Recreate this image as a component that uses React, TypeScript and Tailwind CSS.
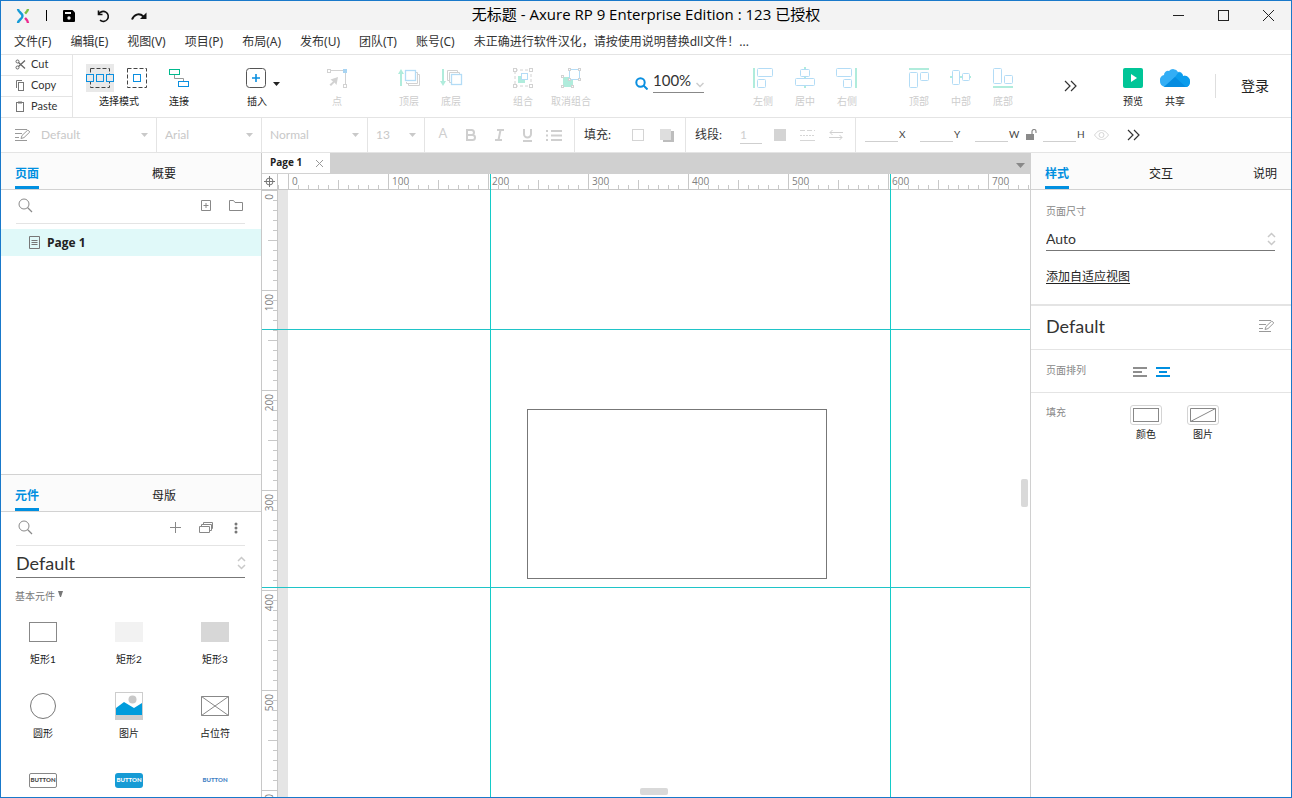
import { useEffect, useRef, useState, type ReactNode } from "react";
import clsx from "clsx";

const MENUS = [
  "文件(F)",
  "编辑(E)",
  "视图(V)",
  "项目(P)",
  "布局(A)",
  "发布(U)",
  "团队(T)",
  "账号(C)",
];

const GUIDES_X = [228, 628];
const GUIDES_Y = [155, 413];

const GREEN = "#b0ecdc";
const BLUE = "#b3dcf6";
const GRAY = "#d2d2d2";

interface ToolProps {
  label: string;
  muted?: boolean;
  className?: string;
  children: ReactNode;
}

function Tool({ label, muted = false, className, children }: ToolProps) {
  return (
    <button
      type="button"
      className={clsx(
        "flex w-[42px] shrink-0 flex-col items-center whitespace-nowrap text-[10px] leading-[14px]",
        muted ? "text-[#cdcdcd]" : "text-[#222]",
        className
      )}
    >
      <svg
        width="42"
        height="22"
        viewBox="0 0 42 22"
        fill="none"
        className="mb-[5px] overflow-visible"
        aria-hidden="true"
      >
        {children}
      </svg>
      {label}
    </button>
  );
}

function Caret() {
  return (
    <svg width="7" height="4" viewBox="0 0 7 4" fill="#c9c9c9" className="shrink-0" aria-hidden="true">
      <path d="M0 0h7L3.500 4z" />
    </svg>
  );
}

function UpDown() {
  return (
    <svg
      width="9"
      height="14"
      viewBox="0 0 9 14"
      fill="none"
      stroke="#c9c9c9"
      strokeWidth="1.5"
      className="pointer-events-none -mr-px shrink-0"
      aria-hidden="true"
    >
      <path d="M1 5l3.500-3.500L8 5M1 9l3.500 3.500L8 9" />
    </svg>
  );
}

function DoubleChevron() {
  return (
    <svg width="13" height="12" viewBox="0 0 13 12" fill="none" stroke="#333" strokeWidth="1.200" aria-hidden="true">
      <path d="M1 1l5 5-5 5M7 1l5 5-5 5" />
    </svg>
  );
}

function SearchIcon() {
  return (
    <svg width="15" height="15" viewBox="0 0 15 15" fill="none" stroke="#8a8a8a" aria-hidden="true">
      <circle cx="6" cy="6" r="5" />
      <path d="M9.500 9.500l4.500 4.500" strokeWidth="1.300" />
    </svg>
  );
}

function StyleEditIcon({ color }: { color: string }) {
  return (
    <svg width="16" height="14" viewBox="0 0 16 14" fill="none" stroke={color} aria-hidden="true">
      <path d="M0 1.500h12M0 5.500h7M0 9.500h4M0 12.500h12" />
      <path d="M6 10.500l1-3L12.800 2l2 2L9 9.600z" />
    </svg>
  );
}

interface FormatSelectProps {
  label: string;
  value: string;
  className: string;
  children?: ReactNode;
}

function FormatSelect({ label, value, className, children }: FormatSelectProps) {
  return (
    <div className={clsx("flex shrink-0 items-center border-r border-[#e4e4e4] pr-2 pl-2", className)}>
      {children}
      <select
        aria-label={label}
        defaultValue={value}
        className="min-w-0 flex-1 appearance-none bg-transparent pb-px text-xs text-[#c8c8c8] outline-none"
      >
        <option>{value}</option>
      </select>
      <Caret />
    </div>
  );
}

function SizeField({ name, className }: { name: string; className?: string }) {
  return (
    <label className={clsx("flex shrink-0 items-center gap-px text-[10px] text-[#444]", className)}>
      <input className="w-[33px] border-b border-[#cfcfcf] bg-transparent text-center text-[#333] outline-none" />
      <span className="text-center">{name}</span>
    </label>
  );
}

interface TabsProps {
  items: string[];
  className?: string;
  tabClassName?: string;
}

function PanelTabs({ items, className, tabClassName }: TabsProps) {
  const [active, setActive] = useState(0);

  return (
    <div
      role="tablist"
      className={clsx("flex h-[37px] shrink-0 border-b border-[#d2d2d2] bg-[#fbfbfb] pl-[14px] text-xs", className)}
    >
      {items.map((item, i) => (
        <div key={item} className={clsx("flex", tabClassName)}>
          <button
            type="button"
            role="tab"
            aria-selected={active === i}
            onClick={() => setActive(i)}
            className={clsx(
              "border-b-[3px] pt-2",
              active === i ? "border-[#008fe0] font-bold text-[#008fe0]" : "border-transparent text-[#222]"
            )}
          >
            {item}
          </button>
        </div>
      ))}
    </div>
  );
}

function TitleBar() {
  return (
    <header className="grid h-[29px] shrink-0 grid-cols-[1fr_auto_1fr] items-center bg-[#f3f3f3]">
      <div className="flex items-center pl-[15px]">
        <svg width="14" height="16" viewBox="0 0 14 16" fill="none" strokeWidth="2.400" aria-hidden="true">
          <path d="M2 1c0 3 4.500 4 4.500 7S2 12 2 15" stroke="#169bd7" />
          <path d="M12 1c0 2-1.500 3-3 4.500" stroke="#7ac143" />
          <path d="M9 10c1.500 1.500 3 2.500 3 5" stroke="#ec2a90" />
        </svg>
        <span className="ml-4 h-[11px] w-px bg-black" />
        <button type="button" aria-label="Save" className="ml-4">
          <svg width="12" height="12" viewBox="0 0 12 12" aria-hidden="true">
            <path d="M1 0h8.500L12 2.500V11a1 1 0 0 1-1 1H1a1 1 0 0 1-1-1V1a1 1 0 0 1 1-1z" />
            <path d="M2 2h6v2H2z" fill="#f3f3f3" />
            <circle cx="6" cy="8" r="1.700" fill="#f3f3f3" />
          </svg>
        </button>
        <button type="button" aria-label="Undo" className="ml-[21px]">
          <svg width="14" height="14" viewBox="0 0 14 14" fill="none" stroke="#111" strokeWidth="1.600" aria-hidden="true">
            <path d="M2.500 1.500v4h4" />
            <path d="M2.800 5.200A5 5 0 1 1 4 11.200" />
          </svg>
        </button>
        <button type="button" aria-label="Redo" className="ml-[21px]">
          <svg width="16" height="10" viewBox="0 0 16 10" aria-hidden="true">
            <path d="M1 8.500C3 3.500 8 1.500 12.500 5.500" fill="none" stroke="#111" strokeWidth="2" />
            <path d="M15.500 1.500V8H9z" fill="#111" />
          </svg>
        </button>
      </div>
      <h1 className="pb-1 font-['Open_Sans','Noto_Sans_CJK_SC',sans-serif] text-[15px] leading-5 text-black">
        无标题 - Axure RP 9 Enterprise Edition : 123 已授权
      </h1>
      <div className="flex justify-end">
        <button type="button" aria-label="Minimize" className="flex w-[45px] justify-center">
          <svg width="12" height="12" viewBox="0 0 12 12" stroke="#222" shapeRendering="crispEdges" aria-hidden="true">
            <path d="M0 5.500h11" />
          </svg>
        </button>
        <button type="button" aria-label="Maximize" className="flex w-[45px] justify-center">
          <svg width="12" height="12" viewBox="0 0 12 12" fill="none" stroke="#222" aria-hidden="true">
            <rect x="0.500" y="0.500" width="10" height="10" />
          </svg>
        </button>
        <button type="button" aria-label="Close" className="flex w-[45px] justify-center">
          <svg width="12" height="12" viewBox="0 0 12 12" stroke="#222" aria-hidden="true">
            <path d="M0 0l11 11M11 0L0 11" />
          </svg>
        </button>
      </div>
    </header>
  );
}

function MenuBar() {
  return (
    <nav className="flex h-[25px] shrink-0 items-center gap-[19px] overflow-hidden border-b border-[#e4e4e4] pl-[13px] font-['Noto_Sans','Noto_Sans_CJK_SC',sans-serif] text-xs whitespace-nowrap text-[#333]">
      {MENUS.map((menu) => (
        <button key={menu} type="button">
          {menu}
        </button>
      ))}
      <button type="button">未正确进行软件汉化，请按使用说明替换dll文件！...</button>
    </nav>
  );
}

function Clipboard() {
  const item = "flex flex-1 items-center gap-[5px] pb-px pl-[14px] text-[11px] text-[#333]";
  return (
    <div className="flex w-[72px] shrink-0 flex-col divide-y divide-[#e4e4e4] border-r border-[#e4e4e4]">
      <button type="button" className={item}>
        <svg width="11" height="11" viewBox="0 0 11 11" fill="none" stroke="#666" aria-hidden="true">
          <circle cx="2.500" cy="2.500" r="1.500" />
          <circle cx="2.500" cy="8.500" r="1.500" />
          <path d="M3.500 3.500L10 9.500M3.500 7.500L10 1.500" strokeWidth="1.300" />
        </svg>
        Cut
      </button>
      <button type="button" className={item}>
        <svg width="11" height="11" viewBox="0 0 11 11" fill="none" stroke="#777" aria-hidden="true">
          <path d="M1.500 8V.500H7" />
          <rect x="3.500" y="2.500" width="5" height="8" />
        </svg>
        Copy
      </button>
      <button type="button" className={item}>
        <svg width="11" height="11" viewBox="0 0 11 11" fill="none" stroke="#777" aria-hidden="true">
          <rect x="1.500" y="1.500" width="7" height="9" />
          <path d="M3 1.500h4" strokeWidth="2" />
        </svg>
        Paste
      </button>
    </div>
  );
}

function Toolbar() {
  return (
    <div className="flex h-[63px] shrink-0 overflow-hidden border-b border-[#e4e4e4]">
      <Clipboard />
      <div className="flex min-w-0 flex-1 pt-3 pr-[22px] pl-[13px]">
        <div className="flex shrink-0 gap-[6px]">
          <div className="flex w-[66px] flex-col items-center text-[10px] leading-[14px] text-[#222]">
            <div className="-mt-[3px] mb-[2px] flex gap-2 self-start">
              <button type="button" aria-label="Intersect mode" className="bg-[#e9e9e9]">
                <svg width="28" height="28" viewBox="0 0 28 28" fill="none" aria-hidden="true">
                  <rect x="4.500" y="4.500" width="19" height="19" stroke="#444" strokeDasharray="4 2" />
                  <g stroke="#0a8fe0" fill="#e9e9e9">
                    <rect x=".500" y="10.500" width="7" height="7" />
                    <rect x="10.500" y="10.500" width="7" height="7" />
                    <rect x="20.500" y="10.500" width="7" height="7" />
                  </g>
                </svg>
              </button>
              <button type="button" aria-label="Contain mode">
                <svg width="28" height="28" viewBox="0 0 28 28" fill="none" aria-hidden="true">
                  <rect x="5.500" y="4.500" width="19" height="19" stroke="#444" strokeDasharray="4 2" />
                  <rect x="11.500" y="10.500" width="7" height="7" stroke="#0a8fe0" />
                </svg>
              </button>
            </div>
            选择模式
          </div>
          <Tool label="连接">
            <rect x="11.500" y="2.500" width="10" height="5" stroke="#00b98d" />
            <path d="M16.500 8v3.500h9V14" stroke="#999" />
            <rect x="20.500" y="14.500" width="10" height="5" stroke="#0a8fe0" />
          </Tool>
        </div>

        <Tool label="插入" className="ml-9">
          <rect x="10.500" y="1.500" width="19" height="19" rx="3" stroke="#555" />
          <path d="M16 11h8M20 7v8" stroke="#0a8fe0" strokeWidth="1.600" />
          <path d="M37 15h7l-3.500 4z" fill="#222" />
        </Tool>

        <Tool label="点" muted className="ml-[38px]">
          <path d="M15 3.500h12M29.500 6v11" stroke={GRAY} />
          <rect x="11.500" y="2.500" width="3" height="3" stroke={GRAY} />
          <rect x="27" y="2" width="4" height="4" fill="#a8d4f2" />
          <rect x="27.500" y="17.500" width="3" height="3" stroke={GRAY} />
          <path d="M22 10l-1.500 8-2-2.500-3.500 3.500-1.500-1.500 3.500-3-2.500-2z" fill={GRAY} />
        </Tool>

        <div className="ml-[30px] flex shrink-0">
          <Tool label="顶层" muted>
            <path d="M13 2l3 5h-2v12h-2V7h-2z" fill={GREEN} />
            <path d="M28 5.500h1.500v11h-11V15M30 7.500h1.500v11h-11V17" stroke={GRAY} />
            <rect x="17.500" y="3.500" width="10" height="10" stroke={BLUE} strokeWidth="1.300" />
          </Tool>
          <Tool label="底层" muted>
            <path d="M13 19l3-5h-2V2h-2v12h-2z" fill={GREEN} />
            <path d="M19 13.500h-1.500v-10h10V5M21 15.500h-1.500v-10h10V7" stroke={GRAY} />
            <rect x="21.500" y="7.500" width="10" height="10" stroke={BLUE} strokeWidth="1.300" />
          </Tool>
        </div>

        <div className="ml-[30px] flex shrink-0 gap-[6px]">
          <Tool label="组合" muted>
            <rect x="13" y="3" width="16" height="16" stroke={GRAY} strokeDasharray="3 2" />
            <rect x="16" y="9" width="7" height="7" fill={GREEN} />
            <rect x="19.500" y="6.500" width="6" height="6" fill="#fff" stroke={BLUE} />
            <g fill="#fff" stroke={GRAY}>
              <rect x="11.500" y="1.500" width="3" height="3" />
              <rect x="27.500" y="1.500" width="3" height="3" />
              <rect x="11.500" y="17.500" width="3" height="3" />
              <rect x="27.500" y="17.500" width="3" height="3" />
            </g>
          </Tool>
          <Tool label="取消组合" muted>
            <rect x="13" y="10" width="10" height="10" fill={GREEN} />
            <rect x="19.500" y="2.500" width="10" height="10" fill="#fff" stroke={BLUE} />
            <g fill="#fff" stroke={GRAY}>
              <rect x="11.500" y="8.500" width="2" height="2" />
              <rect x="11.500" y="18.500" width="2" height="2" />
              <rect x="21.500" y="18.500" width="2" height="2" />
              <rect x="18.500" y="1.500" width="2" height="2" />
              <rect x="28.500" y="1.500" width="2" height="2" />
              <rect x="28.500" y="11.500" width="2" height="2" />
              <rect x="18.500" y="11.500" width="2" height="2" />
            </g>
          </Tool>
        </div>

        <div className="ml-[43px] flex h-[26px] shrink-0 items-center gap-[5px]">
          <svg width="13" height="13" viewBox="0 0 13 13" fill="none" stroke="#0a8fe0" strokeWidth="2" className="mt-[6px]" aria-hidden="true">
            <circle cx="5.500" cy="5.500" r="4.200" />
            <path d="M8.500 8.500l4 4" />
          </svg>
          <div className="flex h-[26px] w-[51px] items-center border-b border-[#888] pt-[2px]">
            <select aria-label="Zoom" defaultValue="100%" className="min-w-0 flex-1 appearance-none bg-transparent text-[15px] text-[#333] outline-none">
              <option>100%</option>
            </select>
            <svg width="8" height="6" viewBox="0 0 8 6" fill="none" stroke="#ccc" strokeWidth="1.500" className="mt-2" aria-hidden="true">
              <path d="M.500 1L4 4.500 7.500 1" />
            </svg>
          </div>
        </div>

        <div className="ml-[38px] flex shrink-0">
          <Tool label="左侧" muted>
            <path d="M11 1h2v20h-2z" fill={GREEN} />
            <g stroke={BLUE}>
              <rect x="15.500" y="1.500" width="15" height="8" rx="1" />
              <rect x="15.500" y="12.500" width="8" height="8" rx="1" />
            </g>
          </Tool>
          <Tool label="居中" muted>
            <path d="M20 0h2v2h-2zM20 9h2v2h-2zM20 19h2v2h-2z" fill={GREEN} />
            <g stroke={BLUE}>
              <rect x="16.500" y="2.500" width="9" height="7" rx="1" />
              <rect x="11.500" y="11.500" width="19" height="7" rx="1" />
            </g>
          </Tool>
          <Tool label="右侧" muted>
            <path d="M29 1h2v20h-2z" fill={GREEN} />
            <g stroke={BLUE}>
              <rect x="10.500" y="1.500" width="15" height="8" rx="1" />
              <rect x="17.500" y="12.500" width="8" height="8" rx="1" />
            </g>
          </Tool>
        </div>

        <div className="ml-[30px] flex shrink-0">
          <Tool label="顶部" muted>
            <path d="M11 1h20v2H11z" fill={GREEN} />
            <g stroke={BLUE}>
              <rect x="11.500" y="5.500" width="8" height="15" rx="1" />
              <rect x="22.500" y="5.500" width="8" height="8" rx="1" />
            </g>
          </Tool>
          <Tool label="中部" muted>
            <path d="M10 9h2v2h-2zM20 9h2v2h-2zM29 9h2v2h-2z" fill={GREEN} />
            <g stroke={BLUE}>
              <rect x="12.500" y="3.500" width="7" height="14" rx="1" />
              <rect x="22.500" y="6.500" width="7" height="7" rx="1" />
            </g>
          </Tool>
          <Tool label="底部" muted>
            <path d="M11 19h20v2H11z" fill={GREEN} />
            <g stroke={BLUE}>
              <rect x="11.500" y="1.500" width="8" height="15" rx="1" />
              <rect x="22.500" y="8.500" width="8" height="8" rx="1" />
            </g>
          </Tool>
        </div>

        <button type="button" aria-label="More tools" className="mt-[13px] ml-10 h-3 shrink-0">
          <DoubleChevron />
        </button>

        <div className="ml-auto flex shrink-0">
          <Tool label="预览">
            <rect x="11" y="1" width="20" height="20" rx="2" fill="#00c597" />
            <path d="M19 7l6 4-6 4z" fill="#fff" />
          </Tool>
          <Tool label="共享">
            <path
              d="M11 20a5.500 5.500 0 0 1-5-6 5.500 5.500 0 0 1 4-6 4 4 0 0 1 5-4 5.500 5.500 0 0 1 9 1 4 4 0 0 1 5 4 5.500 5.500 0 0 1 7 5.500c0 3-1.500 5.500-4 5.500z"
              fill="#33aef5"
            />
            <path d="M10 20L21 10l3-4a4 4 0 0 1 5 3 5.500 5.500 0 0 1 7 5.500c0 3-1.500 5.500-4 5.500z" fill="#0b9cec" />
            <path d="M10 20l11-10 11 10z" fill="#058ce0" />
          </Tool>
          <span className="mt-[7px] ml-[19px] h-6 w-px bg-[#dedede]" />
          <button type="button" className="ml-[25px] h-[38px] text-sm text-[#222]">
            登录
          </button>
        </div>
      </div>
    </div>
  );
}

function FormatBar() {
  return (
    <div className="flex h-[35px] shrink-0 overflow-hidden border-b border-[#e4e4e4] text-xs whitespace-nowrap text-[#333]">
      <FormatSelect label="Widget style" value="Default" className="w-[156px]">
        <span className="mr-[10px] ml-[6px]">
          <StyleEditIcon color="#999" />
        </span>
      </FormatSelect>
      <FormatSelect label="Font" value="Arial" className="w-[105px]" />
      <FormatSelect label="Weight" value="Normal" className="w-[106px]" />
      <FormatSelect label="Font size" value="13" className="w-[57px]" />

      <div className="flex w-[150px] shrink-0 items-center gap-[17px] border-r border-[#e4e4e4] pl-3 text-[#cfcfcf]">
        <button type="button" aria-label="Text color" className="w-3 pb-1 text-center text-[13px] leading-4">
          A
        </button>
        <button type="button" aria-label="Bold">
          <svg width="11" height="12" viewBox="0 0 11 12" fill="none" stroke="currentColor" strokeWidth="2" aria-hidden="true">
            <path d="M1 1h4.500a2.500 2.500 0 0 1 0 5H1zM1 6h5.500a2.500 2.500 0 0 1 0 5H1z" />
          </svg>
        </button>
        <button type="button" aria-label="Italic">
          <svg width="11" height="12" viewBox="0 0 11 12" fill="none" stroke="currentColor" strokeWidth="2" aria-hidden="true">
            <path d="M3 1h7M1 11h7M6.500 1l-2 10" />
          </svg>
        </button>
        <button type="button" aria-label="Underline">
          <svg width="11" height="13" viewBox="0 0 11 13" fill="none" stroke="currentColor" strokeWidth="2" aria-hidden="true">
            <path d="M2 0v5a3.500 3.500 0 0 0 7 0V0M1 12h9" />
          </svg>
        </button>
        <button type="button" aria-label="Bullet list" className="-ml-1">
          <svg width="16" height="11" viewBox="0 0 16 11" stroke="currentColor" strokeWidth="2" aria-hidden="true">
            <path d="M0 1h2M5 1h11M0 5.500h2M5 5.500h11M0 10h2M5 10h11" />
          </svg>
        </button>
      </div>

      <div className="flex w-[111px] shrink-0 items-center border-r border-[#e4e4e4] pl-[9px]">
        <span>填充:</span>
        <button type="button" aria-label="Fill color" className="ml-auto size-3 border border-[#d4d4d4]" />
        <button type="button" aria-label="Shadow" className="mr-[11px] ml-4">
          <svg width="14" height="13" viewBox="0 0 14 13" aria-hidden="true">
            <path d="M3 2h11v11H3z" fill="#bdbdbd" />
            <path d="M0 0h11v11H0z" fill="#dedede" />
          </svg>
        </button>
      </div>

      <div className="flex w-[170px] shrink-0 items-center border-r border-[#e4e4e4] pl-[9px]">
        <label htmlFor="line-width">线段:</label>
        <input
          id="line-width"
          defaultValue="1"
          className="ml-auto w-[22px] border-b border-[#cfcfcf] bg-transparent text-[#cfcfcf] outline-none"
        />
        <button type="button" aria-label="Line color" className="ml-3 size-3 bg-[#d4d4d4]" />
        <button type="button" aria-label="Line style" className="ml-[14px]">
          <svg width="15" height="12" viewBox="0 0 15 12" stroke="#d6d6d6" aria-hidden="true">
            <path d="M0 1.500h15" strokeDasharray="5 2" />
            <path d="M0 6.500h15" strokeDasharray="2 1" />
            <path d="M0 11.500h15" />
          </svg>
        </button>
        <button type="button" aria-label="Arrow style" className="mr-3 ml-[14px]">
          <svg width="14" height="12" viewBox="0 0 14 12" fill="none" stroke="#d0d0d0" aria-hidden="true">
            <path d="M14 3.500H1M3.500 1L1 3.500 3.500 6M0 8.500h13M10.500 6L13 8.500 10.500 11" />
          </svg>
        </button>
      </div>

      <div className="flex min-w-0 flex-1 items-center pl-[9px]">
        <SizeField name="X" className="w-[55px]" />
        <SizeField name="Y" className="w-[55px]" />
        <SizeField name="W" className="w-[51px]" />
        <button type="button" aria-label="Lock ratio" className="shrink-0">
          <svg width="11" height="12" viewBox="0 0 11 12" fill="none" aria-hidden="true">
            <path d="M0 5h8v6H0z" fill="#8a8a8a" />
            <path d="M6 5V2.500a2 2 0 0 1 4 0V4" stroke="#8a8a8a" strokeWidth="1.200" />
          </svg>
        </button>
        <SizeField name="H" className="ml-[6px] w-[51px]" />
        <button type="button" aria-label="Visibility" className="shrink-0">
          <svg width="15" height="10" viewBox="0 0 15 10" fill="none" stroke="#d6d6d6" aria-hidden="true">
            <path d="M.500 5C3 1.500 5 .500 7.500 .500S12 1.500 14.500 5C12 8.500 10 9.500 7.500 9.500S3 8.500 .500 5z" />
            <circle cx="7.500" cy="5" r="2.500" />
          </svg>
        </button>
        <button type="button" aria-label="More options" className="ml-[18px] shrink-0">
          <DoubleChevron />
        </button>
      </div>
    </div>
  );
}

function PagesPanel() {
  return (
    <section className="flex min-h-0 flex-col border-b border-[#d2d2d2]">
      <PanelTabs items={["页面", "概要"]} tabClassName="w-[137px] shrink-0 last:w-auto" />
      <div className="mr-4 ml-[15px] flex h-[34px] shrink-0 items-center border-b border-[#e4e4e4] pb-[2px] pl-[2px]">
        <SearchIcon />
        <input aria-label="Search pages" className="min-w-0 flex-1 bg-transparent text-xs outline-none" />
        <button type="button" aria-label="Add page">
          <svg width="10" height="12" viewBox="0 0 10 12" fill="none" stroke="#888" aria-hidden="true">
            <path d="M.500 .500h9v10h-9zM5 3v5M2.500 5.500h5" />
          </svg>
        </button>
        <button type="button" aria-label="Add folder" className="mr-[2px] ml-[18px]">
          <svg width="14" height="12" viewBox="0 0 14 12" fill="none" stroke="#888" aria-hidden="true">
            <path d="M.500 .500h4l1.500 2h7.500v8H.500z" />
          </svg>
        </button>
      </div>
      <button
        type="button"
        className="mt-[5px] flex h-[27px] items-center gap-[7px] bg-[#e0f9f9] pl-7 font-['Open_Sans',sans-serif] text-xs font-bold text-[#222]"
      >
        <svg width="11" height="13" viewBox="0 0 11 13" fill="none" stroke="#777" aria-hidden="true">
          <path d="M.500 .500h10v12H.500zM2.500 4.500h6M2.500 6.500h6M2.500 8.500h6" />
        </svg>
        Page 1
      </button>
    </section>
  );
}

const WIDGETS: { id: string; label?: string; icon: ReactNode }[] = [
  { id: "box1", label: "矩形1", icon: <span className="h-5 w-7 border border-[#888]" /> },
  { id: "box2", label: "矩形2", icon: <span className="h-5 w-7 bg-[#f2f2f2]" /> },
  { id: "box3", label: "矩形3", icon: <span className="h-5 w-7 bg-[#d7d7d7]" /> },
  { id: "ellipse", label: "圆形", icon: <span className="size-[26px] rounded-full border border-[#777]" /> },
  {
    id: "image",
    label: "图片",
    icon: (
      <svg width="28" height="28" viewBox="0 0 28 28" aria-hidden="true">
        <path d="M0 0h28v28H0z" fill="#cdcdcd" />
        <path d="M1 1h26v22H1z" fill="#fff" />
        <circle cx="17.500" cy="7.500" r="4" fill="#c8c8c8" />
        <path d="M1 16l8-6 10 6 8-5v12H1z" fill="#009cdc" />
      </svg>
    ),
  },
  {
    id: "placeholder",
    label: "占位符",
    icon: (
      <svg width="28" height="20" viewBox="0 0 28 20" fill="none" stroke="#888" aria-hidden="true">
        <path d="M.500 .500h27v19H.500zM.500 .500l27 19M27.500 .500l-27 19" />
      </svg>
    ),
  },
  {
    id: "button",
    icon: (
      <span className="flex h-[15px] w-7 items-center justify-center rounded-[2px] border border-[#888] text-[6px] font-black text-[#444]">
        BUTTON
      </span>
    ),
  },
  {
    id: "primary-button",
    icon: (
      <span className="flex h-[15px] w-7 items-center justify-center rounded-[3px] bg-[#169bd5] text-[6px] font-black text-white">
        BUTTON
      </span>
    ),
  },
  {
    id: "link-button",
    icon: <span className="text-[6px] font-black text-[#3f7fc4]">BUTTON</span>,
  },
];

function LibraryPanel() {
  return (
    <section className="flex min-h-0 flex-col overflow-hidden">
      <PanelTabs items={["元件", "母版"]} tabClassName="w-[137px] shrink-0 last:w-auto" />
      <div className="mr-4 ml-[15px] flex h-[34px] shrink-0 items-center border-b border-[#e4e4e4] pb-[2px] pl-[2px]">
        <SearchIcon />
        <input aria-label="Search widgets" className="min-w-0 flex-1 bg-transparent text-xs outline-none" />
        <button type="button" aria-label="Add library">
          <svg width="11" height="11" viewBox="0 0 11 11" stroke="#888" aria-hidden="true">
            <path d="M0 5.500h11M5.500 0v11" />
          </svg>
        </button>
        <button type="button" aria-label="Library list" className="ml-[18px]">
          <svg width="15" height="12" viewBox="0 0 15 12" fill="none" stroke="#888" aria-hidden="true">
            <path d="M.500 4.500h10v6H.500zM2.500 4V2.500h10v6H11M4.500 2V.500h9v6h-1" />
          </svg>
        </button>
        <button type="button" aria-label="Library options" className="mr-[7px] ml-5">
          <svg width="4" height="12" viewBox="0 0 4 12" fill="#777" aria-hidden="true">
            <circle cx="2" cy="2" r="1.500" />
            <circle cx="2" cy="6" r="1.500" />
            <circle cx="2" cy="10" r="1.500" />
          </svg>
        </button>
      </div>
      <div className="mr-4 ml-[15px] flex h-8 shrink-0 items-center border-b border-[#777] pt-[2px]">
        <select
          aria-label="Library"
          defaultValue="Default"
          className="min-w-0 flex-1 appearance-none bg-transparent text-lg leading-6 text-[#333] outline-none"
        >
          <option>Default</option>
        </select>
        <UpDown />
      </div>
      <button
        type="button"
        className="mt-[11px] flex items-center gap-[3px] self-start pl-[14px] text-[10px] leading-[14px] text-[#777]"
      >
        基本元件
        <svg width="5" height="6" viewBox="0 0 5 6" fill="#777" className="mb-1" aria-hidden="true">
          <path d="M0 0h5L3 6H2z" />
        </svg>
      </button>
      <ul className="mt-[15px] -ml-px grid grid-cols-3 gap-y-[26px] pr-[3px]">
        {WIDGETS.map((widget) => (
          <li key={widget.id} className="flex flex-col items-center gap-[6px] text-[10px] leading-[14px] text-[#222]">
            <span className="flex h-7 items-center justify-center">{widget.icon}</span>
            {widget.label}
          </li>
        ))}
      </ul>
    </section>
  );
}

function Ruler({ vertical = false }: { vertical?: boolean }) {
  const ref = useRef<SVGSVGElement | null>(null);
  const [length, setLength] = useState(0);

  useEffect(() => {
    if (!ref.current) return;

    const observer = new ResizeObserver(([entry]) => {
      setLength(vertical ? entry.contentRect.height : entry.contentRect.width);
    });
    observer.observe(ref.current);
    return () => observer.disconnect();
  }, [vertical]);

  // the horizontal ruler starts one tick before zero
  const first = vertical ? 0 : -1;
  const ticks = Array.from({ length: Math.ceil(length / 10) }, (_, i) => i + first);

  return (
    <svg
      ref={ref}
      width="100%"
      height="100%"
      className="block overflow-hidden font-['Open_Sans',sans-serif] text-[10px]"
      aria-hidden="true"
    >
      {ticks.map((t) => {
        const pos = (t - first) * 10;
        const size = t % 10 === 0 ? 15 : t % 5 === 0 ? 9 : 4;
        return vertical ? (
          <rect key={t} x={15 - size} y={pos} width={size} height="1" fill="#c8c8c8" />
        ) : (
          <rect key={t} x={pos} y={15 - size} width="1" height={size} fill="#c8c8c8" />
        );
      })}
      {ticks
        .filter((t) => t % 10 === 0)
        .map((t) => {
          const pos = (t - first) * 10 + 4;
          return vertical ? (
            <text key={t} transform={`translate(11 ${pos}) rotate(-90)`} textAnchor="end" fill="#808080">
              {t * 10}
            </text>
          ) : (
            <text key={t} x={pos} y="11" fill="#808080">
              {t * 10}
            </text>
          );
        })}
    </svg>
  );
}

function Workspace() {
  return (
    <main className="flex min-w-0 flex-1 flex-col">
      <div className="flex h-[21px] shrink-0 bg-[#d0d0d0]">
        <div className="flex w-[68px] items-center justify-between border-b border-[#d2d2d2] bg-white pr-[7px] pl-2">
          <span className="pb-px font-['Open_Sans',sans-serif] text-[10px] font-bold text-[#222]">Page 1</span>
          <button type="button" aria-label="Close page">
            <svg width="7" height="7" viewBox="0 0 7 7" stroke="#999" aria-hidden="true">
              <path d="M0 0l7 7M7 0L0 7" />
            </svg>
          </button>
        </div>
        <button type="button" aria-label="Open pages" className="mt-1 mr-[5px] ml-auto">
          <svg width="9" height="5" viewBox="0 0 9 5" fill="#888" aria-hidden="true">
            <path d="M0 0h9L4.500 5z" />
          </svg>
        </button>
      </div>

      <div className="relative grid min-h-0 flex-1 grid-cols-[16px_minmax(0,1fr)] grid-rows-[16px_minmax(0,1fr)] overflow-hidden">
        <div className="flex items-center justify-center border-r border-b border-[#c8c8c8]">
          <svg width="11" height="11" viewBox="0 0 11 11" fill="none" stroke="#777" aria-hidden="true">
            <circle cx="5.500" cy="5.500" r="3.500" />
            <path d="M0 5.500h11M5.500 0v11" />
          </svg>
        </div>
        <div className="min-w-0 border-b border-[#c8c8c8]">
          <Ruler />
        </div>
        <div className="min-h-0 border-r border-[#c8c8c8]">
          <Ruler vertical />
        </div>
        <div className="border-l-[10px] border-[#e5e5e5] bg-white" />

        <div className="absolute top-[235px] left-[265px] h-[170px] w-[300px] border border-[#777] bg-white" />
        {GUIDES_Y.map((y) => (
          <div key={y} className="absolute inset-x-0 h-px bg-[#1fc4c8]" style={{ top: y }} />
        ))}
        {GUIDES_X.map((x) => (
          <div key={x} className="absolute inset-y-0 w-px bg-[#14cbc8]" style={{ left: x }} />
        ))}
        <div className="absolute top-[305px] right-[2px] h-7 w-[7px] rounded-[2px] bg-[#d9d9d9]" />
        <div className="absolute bottom-[2px] left-[378px] h-[7px] w-7 rounded-[2px] bg-[#d9d9d9]" />
      </div>
    </main>
  );
}

function StylePanel() {
  return (
    <aside className="flex w-[261px] shrink-0 flex-col border-l border-[#d0d0d0] text-[#222]">
      <PanelTabs items={["样式", "交互", "说明"]} className="justify-between pr-[14px]" />

      <section className="border-b-2 border-[#e4e4e4] pt-[14px] pr-4 pb-[19px] pl-[15px]">
        <label htmlFor="page-size" className="block text-[10px] leading-[14px] text-[#888]">
          页面尺寸
        </label>
        <div className="mt-[10px] flex h-[23px] items-center border-b border-[#777]">
          <select
            id="page-size"
            defaultValue="Auto"
            className="min-w-0 flex-1 appearance-none bg-transparent text-sm text-[#333] outline-none"
          >
            <option>Auto</option>
          </select>
          <UpDown />
        </div>
        <a href="#adaptive" className="mt-[18px] block w-fit text-xs leading-4 underline underline-offset-2">
          添加自适应视图
        </a>
      </section>

      <section className="flex h-11 items-center justify-between border-b border-[#e4e4e4] pr-4 pb-[3px] pl-[15px]">
        <h2 className="text-lg text-[#333]">Default</h2>
        <button type="button" aria-label="Edit style">
          <StyleEditIcon color="#999" />
        </button>
      </section>

      <section className="flex h-[43px] items-center border-b border-[#e4e4e4] px-[15px] pt-px">
        <h3 className="w-[87px] pb-1 text-[10px] leading-[14px] text-[#888]">页面排列</h3>
        <button type="button" aria-label="Align left">
          <svg width="14" height="10" viewBox="0 0 14 10" fill="#8e8e8e" aria-hidden="true">
            <path d="M0 0h14v2H0zM0 4h9v2H0zM0 8h14v2H0z" />
          </svg>
        </button>
        <button type="button" aria-label="Align center" className="ml-[9px]">
          <svg width="14" height="10" viewBox="0 0 14 10" fill="#008fe0" aria-hidden="true">
            <path d="M0 0h14v2H0zM3 4h8v2H3zM0 8h14v2H0z" />
          </svg>
        </button>
      </section>

      <section className="flex px-[15px] pt-3">
        <h3 className="w-[84px] text-[10px] leading-[14px] text-[#888]">填充</h3>
        <div className="flex gap-[25px] text-[10px] leading-[14px]">
          <button type="button" className="flex flex-col items-center gap-[2px]">
            <span className="flex h-5 w-8 items-center justify-center rounded-[3px] border border-[#d4d4d4]">
              <span className="h-[14px] w-[26px] border border-[#888]" />
            </span>
            颜色
          </button>
          <button type="button" className="flex flex-col items-center gap-[2px]">
            <span className="flex h-5 w-8 items-center justify-center rounded-[3px] border border-[#d4d4d4]">
              <svg width="26" height="14" viewBox="0 0 26 14" fill="none" stroke="#888" aria-hidden="true">
                <path d="M.500 .500h25v13H.500zM.500 13.500l25-13" />
              </svg>
            </span>
            图片
          </button>
        </div>
      </section>
    </aside>
  );
}

export default function App() {
  return (
    <div className="flex h-screen flex-col overflow-hidden border border-[#1979ca] bg-white font-['Lato','Noto_Sans_CJK_SC',sans-serif]">
      <TitleBar />
      <MenuBar />
      <Toolbar />
      <FormatBar />
      <div className="flex min-h-0 flex-1">
        <aside className="grid w-[261px] shrink-0 grid-rows-2 border-r border-[#c8c8c8]">
          <PagesPanel />
          <LibraryPanel />
        </aside>
        <Workspace />
        <StylePanel />
      </div>
    </div>
  );
}
